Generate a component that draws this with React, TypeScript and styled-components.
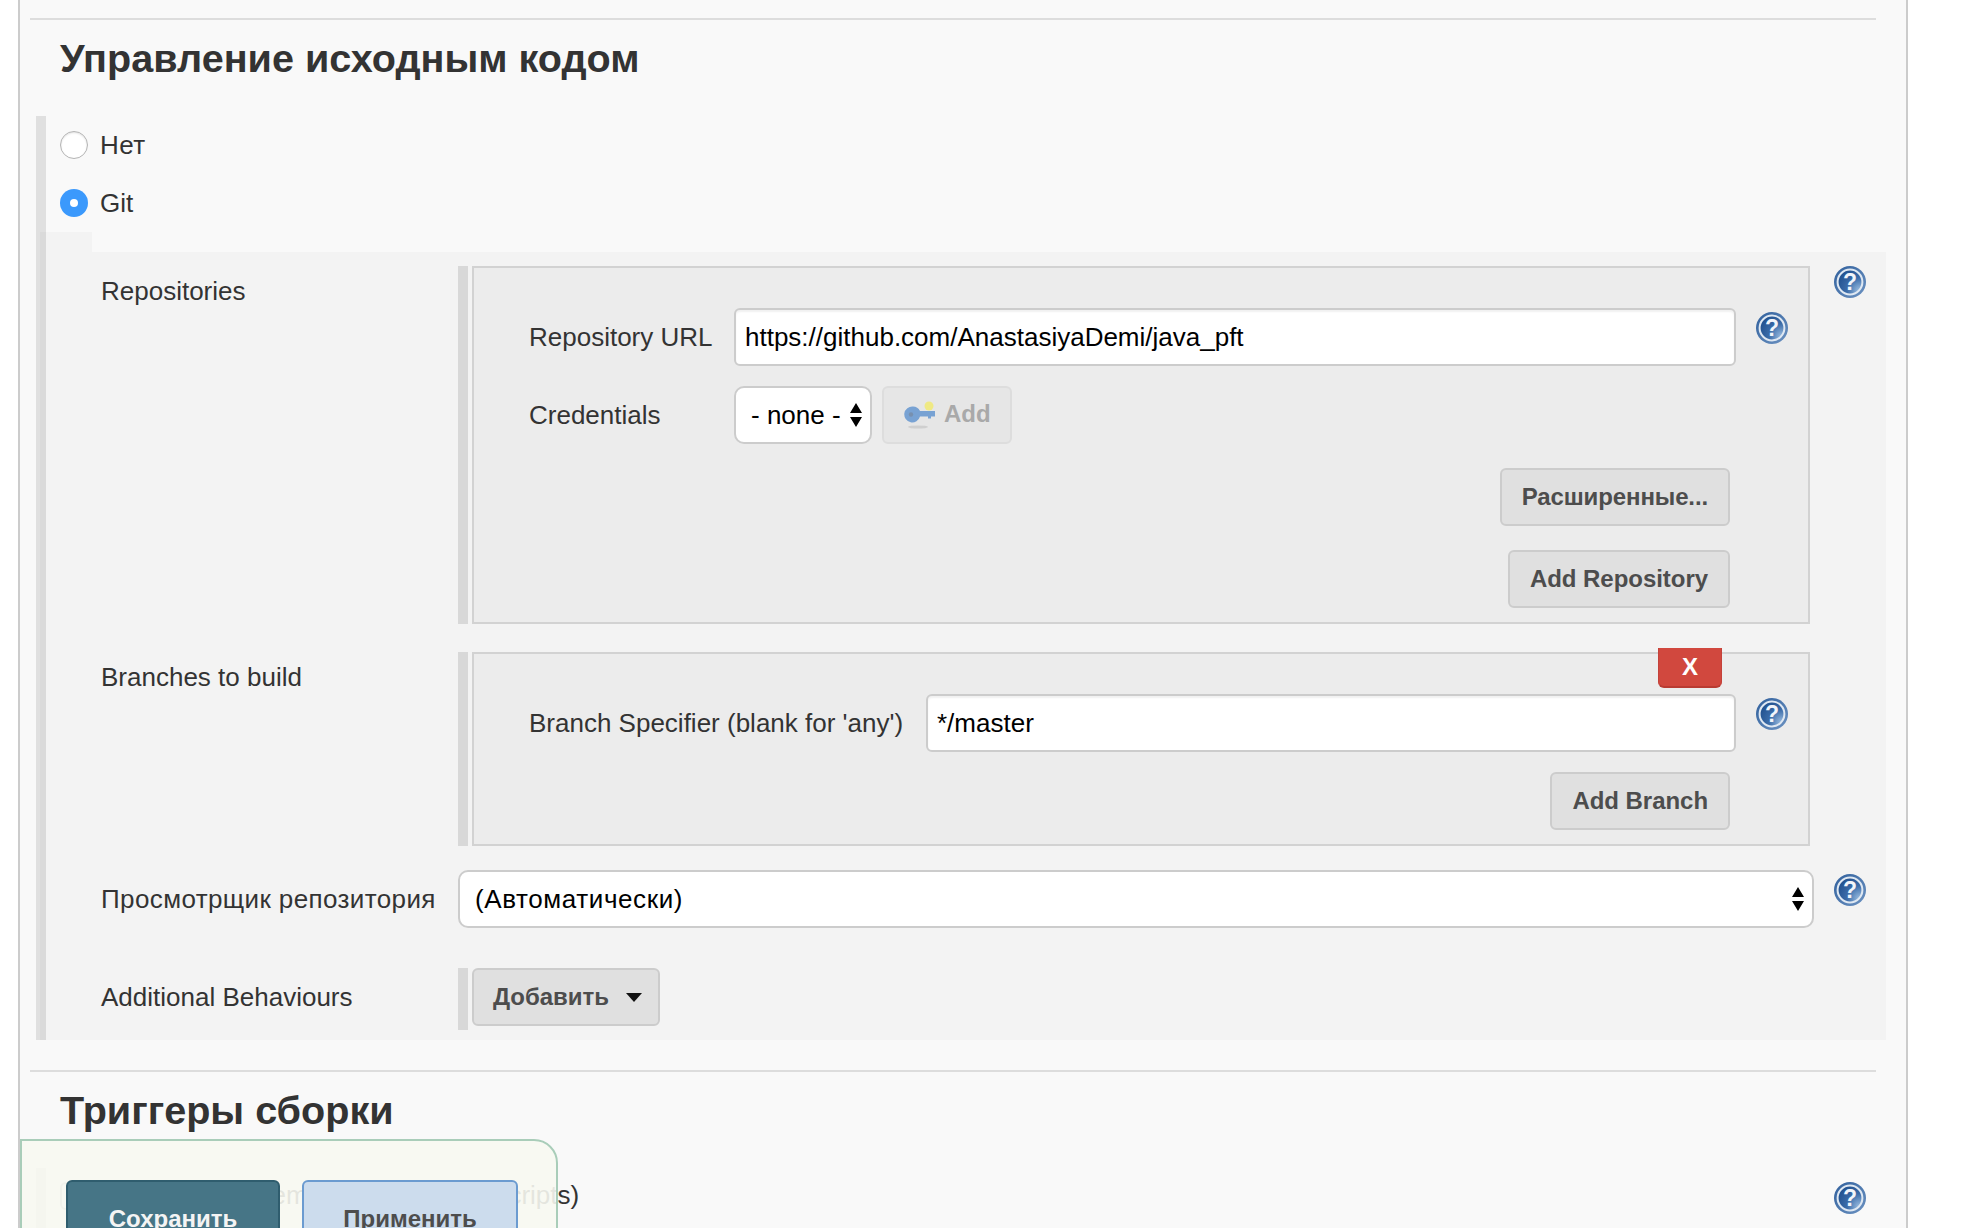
import { useId } from "react";
import styled, { createGlobalStyle } from "styled-components";

const GlobalStyle = createGlobalStyle`
  html, body {
    margin: 0;
    padding: 0;
    background: #fff;
  }
  body {
    font-family: "Liberation Sans", Arial, sans-serif;
    font-size: 26px;
    color: #333;
  }
  * {
    box-sizing: border-box;
  }
`;

const HelpIcon = () => {
  const id = useId();
  return (
    <svg width="32" height="32" viewBox="0 0 32 32">
      <defs>
        <linearGradient id={`${id}o`} x1="0" y1="0" x2="1" y2="1">
          <stop offset="0" stopColor="#2f5f9c" />
          <stop offset="1" stopColor="#6d93c2" />
        </linearGradient>
        <radialGradient id={`${id}i`} cx="0.9" cy="0.85" r="1.05">
          <stop offset="0" stopColor="#9dbfe2" />
          <stop offset="0.5" stopColor="#3b6ca9" />
          <stop offset="1" stopColor="#1f4e8c" />
        </radialGradient>
      </defs>
      <circle cx="16" cy="16" r="16" fill={`url(#${id}o)`} />
      <circle cx="16" cy="16" r="12.4" fill={`url(#${id}i)`} stroke="#dfe8f2" strokeWidth="2" />
      <text x="16" y="24" textAnchor="middle" fontFamily="Liberation Sans" fontWeight="700" fontSize="23" fill="#f2f5fa">
        ?
      </text>
    </svg>
  );
};

const KeyIcon = () => (
  <svg width="32" height="32" viewBox="0 0 32 32">
    <ellipse cx="14" cy="29" rx="10" ry="1.6" fill="#bdbdbd" opacity="0.6" />
    <circle cx="25" cy="8" r="4.5" fill="#f0ea7a" />
    <path d="M9 8.5a8 8 0 0 1 7 4.5H31v5.5h-4v2h-3v-2h-8A8 8 0 1 1 9 8.5z" fill="#6d9bd1" />
    <circle cx="7" cy="16.5" r="2.2" fill="#6c87aa" />
  </svg>
);

const UpDownArrows = () => (
  <svg width="12" height="24" viewBox="0 0 12 24">
    <path d="M6 0l6 10H0zM0 14h12L6 24z" fill="#000" />
  </svg>
);

const SectionHead = ({ title }: { title: string }) => (
  <>
    <Divider />
    <Heading>{title}</Heading>
  </>
);

export default function App() {
  return (
    <>
      <GlobalStyle />
      <Page>
        <Panel>
          <SectionHead title="Управление исходным кодом" />

          <OptionGroup>
            <RadioRow>
              <Radio />
              <Cyrillic>Нет</Cyrillic>
            </RadioRow>
            <RadioRow>
              <Radio $checked />
              Git
            </RadioRow>
            <Notch />
            <GitBody>
              <FormRow $top={14}>
                <RowLabel>Repositories</RowLabel>
                <RepeatArea>
                  <RepeatBar />
                  <RepeatBox $height={358}>
                    <BoxRow>
                      <BoxLabel $width={205}>Repository URL</BoxLabel>
                      <TextField readOnly value="https://github.com/AnastasiyaDemi/java_pft" />
                      <HelpSlot $top={4}>
                        <HelpIcon />
                      </HelpSlot>
                    </BoxRow>
                    <BoxRow $top={20}>
                      <BoxLabel $width={205}>Credentials</BoxLabel>
                      <SelectWrap $width={138}>
                        <SelectField defaultValue="none" $pad={15}>
                          <option value="none">- none -</option>
                        </SelectField>
                        <ArrowSlot $right={10}>
                          <UpDownArrows />
                        </ArrowSlot>
                      </SelectWrap>
                      <DisabledButton>
                        <KeyIcon />
                        Add
                      </DisabledButton>
                    </BoxRow>
                    <ButtonRow $top={24}>
                      <Button $narrow>Расширенные...</Button>
                    </ButtonRow>
                    <ButtonRow $top={24}>
                      <Button>Add Repository</Button>
                    </ButtonRow>
                  </RepeatBox>
                </RepeatArea>
                <HelpSlot $left={24}>
                  <HelpIcon />
                </HelpSlot>
              </FormRow>

              <FormRow $top={28}>
                <RowLabel>Branches to build</RowLabel>
                <RepeatArea>
                  <RepeatBar />
                  <RepeatBox $height={194}>
                    <DeleteButton>X</DeleteButton>
                    <BoxRow>
                      <BoxLabel $width={397}>Branch Specifier (blank for 'any')</BoxLabel>
                      <TextField readOnly value="*/master" />
                      <HelpSlot $top={4}>
                        <HelpIcon />
                      </HelpSlot>
                    </BoxRow>
                    <ButtonRow $top={20}>
                      <Button>Add Branch</Button>
                    </ButtonRow>
                  </RepeatBox>
                </RepeatArea>
              </FormRow>

              <FormRow $top={24}>
                <RowLabel $top={14}>
                  <Cyrillic>Просмотрщик репозитория</Cyrillic>
                </RowLabel>
                <SelectWrap $width={1356}>
                  <SelectField defaultValue="auto" $pad={15} $spread>
                    <option value="auto">(Автоматически)</option>
                  </SelectField>
                  <ArrowSlot $right={10}>
                    <UpDownArrows />
                  </ArrowSlot>
                </SelectWrap>
                <HelpSlot $left={20} $top={4}>
                  <HelpIcon />
                </HelpSlot>
              </FormRow>

              <FormRow $top={40}>
                <RowLabel $top={14}>Additional Behaviours</RowLabel>
                <RepeatArea>
                  <RepeatBar $height={62} />
                  <MenuButton>
                    Добавить
                    <Caret />
                  </MenuButton>
                </RepeatArea>
              </FormRow>
            </GitBody>
          </OptionGroup>

          <SectionHead title="Триггеры сборки" />

          <TriggerGroup>
            <Checkbox />
            <TriggerText>Trigger builds remotely (e.g., from scripts)</TriggerText>
            <HelpSlot $left={0} $top={2}>
              <HelpIcon />
            </HelpSlot>
          </TriggerGroup>
        </Panel>

        <BottomBar>
          <SaveButton>Сохранить</SaveButton>
          <ApplyButton>Применить</ApplyButton>
        </BottomBar>
      </Page>
    </>
  );
}

const Page = styled.div`
  position: relative;
  width: 1972px;
  height: 1228px;
  overflow: hidden;
  padding-left: 18px;
`;

const Panel = styled.div`
  width: 1890px;
  height: 1228px;
  padding-top: 18px;
  background: #f9f9f9;
  border-left: 2px solid #ccc;
  border-right: 2px solid #ccc;
`;

const Divider = styled.div`
  width: 1846px;
  height: 2px;
  margin-left: 10px;
  background: #ddd;
`;

const Heading = styled.h2`
  margin: 16px 0 0 40px;
  font-size: 39.6px;
  line-height: 44px;
  font-weight: 700;
  color: #333;
`;

const OptionGroup = styled.div`
  width: 1850px;
  margin: 36px 0 30px 16px;
  border-left: 10px solid #e0e0e0;
`;

const Cyrillic = styled.span`
  letter-spacing: 0.38px;
`;

const RadioRow = styled.div`
  display: flex;
  align-items: center;
  gap: 12px;
  height: 58px;
  padding-left: 14px;
  font-size: 26px;
  color: #333;
`;

const Radio = styled.span<{ $checked?: boolean }>`
  display: flex;
  align-items: center;
  justify-content: center;
  width: 28px;
  height: 28px;
  border-radius: 50%;
  background: ${(p) => (p.$checked ? "#3b99fc" : "#fff")};
  border: ${(p) => (p.$checked ? "none" : "1.5px solid #b4b4b4")};
  box-shadow: ${(p) => (p.$checked ? "none" : "inset 0 1px 2px rgba(0, 0, 0, 0.12)")};

  &::after {
    content: "";
    display: ${(p) => (p.$checked ? "block" : "none")};
    width: 8px;
    height: 8px;
    border-radius: 50%;
    background: #fff;
  }
`;

const Notch = styled.div`
  width: 52px;
  height: 20px;
  margin-left: -6px;
  background: rgba(0, 0, 0, 0.025);
`;

const GitBody = styled.div`
  display: flex;
  flex-direction: column;
  width: 1846px;
  height: 788px;
  margin-left: -6px;
  padding-left: 61px;
  background: rgba(0, 0, 0, 0.025);
`;

const FormRow = styled.div<{ $top: number }>`
  display: flex;
  align-items: flex-start;
  margin-top: ${(p) => p.$top}px;
`;

const RowLabel = styled.div<{ $top?: number }>`
  flex: 0 0 357px;
  padding-top: ${(p) => p.$top ?? 10}px;
  font-size: 26px;
  line-height: 30px;
  color: #333;
`;

const RepeatArea = styled.div`
  display: flex;
  gap: 4px;
`;

const RepeatBar = styled.div<{ $height?: number }>`
  flex: 0 0 10px;
  height: ${(p) => (p.$height ? `${p.$height}px` : "auto")};
  background: #d8d8d8;
`;

const RepeatBox = styled.div<{ $height: number }>`
  position: relative;
  width: 1338px;
  height: ${(p) => p.$height}px;
  padding: 40px 20px 0 55px;
  background: #ececec;
  border: 2px solid #d2d2d2;
`;

const BoxRow = styled.div<{ $top?: number }>`
  display: flex;
  align-items: flex-start;
  margin-top: ${(p) => p.$top ?? 0}px;
`;

const BoxLabel = styled.div<{ $width: number }>`
  flex: 0 0 ${(p) => p.$width}px;
  height: 58px;
  line-height: 58px;
  font-size: 26px;
  color: #333;
  white-space: nowrap;
`;

const TextField = styled.input`
  flex: 1;
  min-width: 0;
  height: 58px;
  padding: 0 9px;
  font: 26px "Liberation Sans", Arial, sans-serif;
  color: #000;
  background: #fff;
  border: 2px solid #ccc;
  border-radius: 6px;
  outline: none;
  box-shadow: inset 0 2px 2px rgba(0, 0, 0, 0.06);
`;

const HelpSlot = styled.div<{ $left?: number; $top?: number }>`
  flex: 0 0 32px;
  height: 32px;
  margin-left: ${(p) => p.$left ?? 20}px;
  margin-top: ${(p) => p.$top ?? 0}px;
`;

const SelectWrap = styled.div<{ $width: number }>`
  position: relative;
  flex: 0 0 ${(p) => p.$width}px;
  height: 58px;
`;

const SelectField = styled.select<{ $pad: number; $spread?: boolean }>`
  display: block;
  width: 100%;
  height: 100%;
  padding: 0 ${(p) => p.$pad}px;
  appearance: none;
  font: 26px "Liberation Sans", Arial, sans-serif;
  letter-spacing: ${(p) => (p.$spread ? "0.6px" : "0")};
  color: #000;
  background: #fff;
  border: 2px solid #ccc;
  border-radius: 10px;
  outline: none;
`;

const ArrowSlot = styled.div<{ $right: number }>`
  position: absolute;
  top: 17px;
  right: ${(p) => p.$right}px;
  height: 24px;
  pointer-events: none;
`;

const Button = styled.button<{ $narrow?: boolean }>`
  height: 58px;
  padding: 0 20px;
  font: 700 24px "Liberation Sans", Arial, sans-serif;
  letter-spacing: ${(p) => (p.$narrow ? "-0.12px" : "-0.04px")};
  color: #4d4d4d;
  background: #e0e0e0;
  border: 2px solid #ccc;
  border-radius: 6px;
`;

const ButtonRow = styled.div<{ $top: number }>`
  display: flex;
  justify-content: flex-end;
  margin: ${(p) => p.$top}px 58px 0 0;
`;

const DisabledButton = styled(Button)`
  display: flex;
  align-items: center;
  gap: 8px;
  width: 130px;
  margin-left: 10px;
  padding: 0 0 2px 20px;
  color: #a9a9a9;
  background: #e6e6e6;
  border-color: #ddd;

  svg {
    filter: blur(0.7px);
    opacity: 0.9;
  }
`;

const DeleteButton = styled.button`
  position: absolute;
  top: -6px;
  right: 86px;
  width: 64px;
  height: 40px;
  padding: 0;
  font: 700 24px "Liberation Sans", Arial, sans-serif;
  color: #fff;
  background: #d1483e;
  border: none;
  border-bottom: 2px solid #b93b32;
  border-left: 1px solid #c4423a;
  border-right: 1px solid #c4423a;
  border-radius: 0 0 6px 6px;
`;

const MenuButton = styled(Button)`
  display: flex;
  align-items: center;
  justify-content: space-between;
  width: 188px;
  padding: 0 16px 0 19px;
`;

const Caret = styled.span`
  width: 0;
  height: 0;
  border-left: 8px solid transparent;
  border-right: 8px solid transparent;
  border-top: 9px solid #111;
`;

const TriggerGroup = styled.div`
  display: flex;
  align-items: flex-start;
  width: 1850px;
  height: 80px;
  margin: 36px 0 0 16px;
  padding: 12px 20px 0 14px;
  border-left: 10px solid #e0e0e0;
`;

const Checkbox = styled.span`
  flex: 0 0 28px;
  height: 28px;
  margin-top: 2px;
  background: #fff;
  border: 2px solid #bbb;
  border-radius: 6px;
`;

const TriggerText = styled.div`
  flex: 1;
  margin-left: 11px;
  font-size: 26px;
  line-height: 30px;
  color: #333;
`;

const BottomBar = styled.div`
  position: absolute;
  left: 20px;
  top: 1139px;
  display: flex;
  gap: 22px;
  width: 538px;
  height: 140px;
  padding: 39px 0 0 44px;
  background: rgba(247, 248, 241, 0.9);
  border: 2px solid #a9cdb9;
  border-radius: 0 24px 0 0;
`;

const SaveButton = styled.button`
  width: 214px;
  height: 78px;
  padding: 0;
  font: 700 24px "Liberation Sans", Arial, sans-serif;
  color: #f4f4f4;
  background: #467586;
  border: 2px solid #2f5d6e;
  border-radius: 6px;
`;

const ApplyButton = styled(SaveButton)`
  width: 216px;
  color: #4d4d4d;
  background: #ccdced;
  border-color: #6b9bd0;
`;
